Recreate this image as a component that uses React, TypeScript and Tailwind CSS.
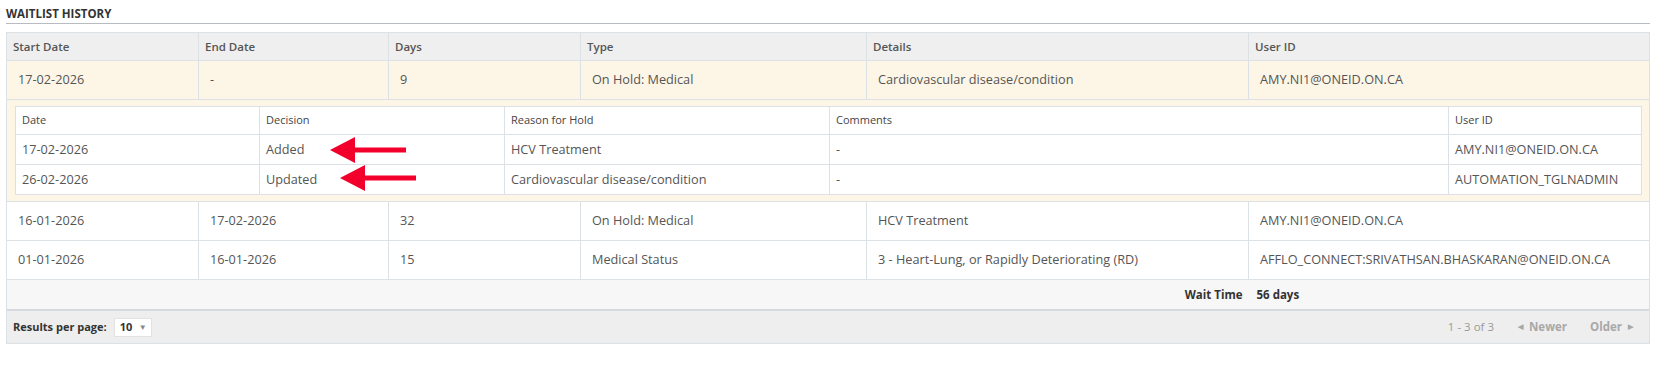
import React from "react";

const outerRows = [
  ["16-01-2026", "17-02-2026", "32", "On Hold: Medical", "HCV Treatment", "AMY.NI1@ONEID.ON.CA"],
  ["01-01-2026", "16-01-2026", "15", "Medical Status", "3 - Heart-Lung, or Rapidly Deteriorating (RD)", "AFFLO_CONNECT:SRIVATHSAN.BHASKARAN@ONEID.ON.CA"],
];

function Arrow({ className }: { className: string }) {
  return (
    <svg className={className} width="76" height="26" viewBox="0 0 76 26">
      <polygon points="0,13 25,0 25,10.5 76,10.5 76,15.5 25,15.5 25,26" fill="#f2002b" />
    </svg>
  );
}

export default function App() {
  const th = "h-[28px] px-[6px] text-left align-middle font-semibold text-[11.5px] text-[#555] border border-[#dce1e6]";
  const td = "h-[39px] pl-[11px] pr-[6px] text-left align-middle text-[12.7px] text-[#555] border border-[#dce1e6]";
  const nth = "h-[28px] px-[6px] text-left align-middle font-normal text-[11px] text-[#444] border border-[#dce1e6]";
  const ntd = "h-[30px] px-[6px] text-left align-middle text-[12.7px] text-[#555] border border-[#dce1e6]";
  return (
    <div className="w-[1662px] h-[377px] bg-white font-['Open_Sans',sans-serif] pl-[6px] pr-[12px]">
      <div className="h-[24px] border-b border-[#b7bcc3] flex items-end pb-[4px]">
        <span className="text-[11.5px] font-bold text-[#333] leading-none">WAITLIST HISTORY</span>
      </div>
      <div className="mt-[8px] relative">
        <table className="w-[1644px] table-fixed border-collapse">
          <colgroup>
            <col className="w-[192px]" />
            <col className="w-[190px]" />
            <col className="w-[192px]" />
            <col className="w-[286px]" />
            <col className="w-[382px]" />
            <col />
          </colgroup>
          <thead>
            <tr className="bg-[#efefef]">
              <th className={th}>Start Date</th>
              <th className={th}>End Date</th>
              <th className={th}>Days</th>
              <th className={th}>Type</th>
              <th className={th}>Details</th>
              <th className={th}>User ID</th>
            </tr>
          </thead>
          <tbody>
            <tr className="bg-[#fdf6e7]">
              <td className={td}>17-02-2026</td>
              <td className={td}>-</td>
              <td className={td}>9</td>
              <td className={td}>On Hold: Medical</td>
              <td className={td}>Cardiovascular disease/condition</td>
              <td className={td}>AMY.NI1@ONEID.ON.CA</td>
            </tr>
            <tr className="bg-[#fdf6e7]">
              <td colSpan={6} className="border border-[#dce1e6] pl-[8px] pr-[7px] pt-[6px] pb-[6px]">
                <table className="w-full table-fixed border-collapse bg-white">
                  <colgroup>
                    <col className="w-[244px]" />
                    <col className="w-[245px]" />
                    <col className="w-[325px]" />
                    <col className="w-[619px]" />
                    <col />
                  </colgroup>
                  <thead>
                    <tr>
                      <th className={nth}>Date</th>
                      <th className={nth}>Decision</th>
                      <th className={nth}>Reason for Hold</th>
                      <th className={nth}>Comments</th>
                      <th className={nth}>User ID</th>
                    </tr>
                  </thead>
                  <tbody>
                    <tr>
                      <td className={ntd}>17-02-2026</td>
                      <td className={ntd}>Added</td>
                      <td className={ntd}>HCV Treatment</td>
                      <td className={ntd}>-</td>
                      <td className={ntd}>AMY.NI1@ONEID.ON.CA</td>
                    </tr>
                    <tr>
                      <td className={ntd}>26-02-2026</td>
                      <td className={ntd}>Updated</td>
                      <td className={ntd}>Cardiovascular disease/condition</td>
                      <td className={ntd}>-</td>
                      <td className={ntd}>AUTOMATION_TGLNADMIN</td>
                    </tr>
                  </tbody>
                </table>
              </td>
            </tr>
            {outerRows.map((r, i) => (
              <tr key={i} className="bg-white">
                {r.map((c, j) => (
                  <td key={j} className={td}>
                    {c}
                  </td>
                ))}
              </tr>
            ))}
            <tr className="bg-[#f7f7f7]">
              <td colSpan={5} className="h-[30px] pr-[6px] text-right align-middle text-[11.5px] font-bold text-[#333] border-t border-l border-b border-[#dce1e6]">
                Wait Time
              </td>
              <td className="h-[30px] pl-[8px] text-left align-middle text-[11.5px] font-bold text-[#333] border-t border-r border-b border-[#dce1e6]">
                56 days
              </td>
            </tr>
          </tbody>
        </table>
        <div className="w-[1644px] h-[35px] bg-[#eeeeee] border border-t-2 border-[#dce1e6] border-t-[#d6dae0] -mt-[1px] flex items-center justify-between pl-[6px] pr-[16px]">
          <div className="flex items-center">
            <span className="text-[11px] font-bold text-[#333]">Results per page:</span>
            <div className="ml-[7px] w-[38px] h-[19px] bg-white border border-[#e2e2e2] flex items-center justify-between pl-[5px] pr-[4px]">
              <span className="text-[11px] font-bold text-[#333]">10</span>
              <span className="text-[8px] text-[#888]">▼</span>
            </div>
          </div>
          <div className="flex items-center text-[11.5px] text-[#9a9a9a]">
            <span>1 - 3 of 3</span>
            <span className="ml-[24px] font-bold text-[#a8a8a8] flex items-center">
              <span className="text-[7px] mr-[6px]">◀</span>Newer
            </span>
            <span className="ml-[23px] font-bold text-[#a8a8a8] flex items-center">
              Older<span className="text-[7px] ml-[6px]">▶</span>
            </span>
          </div>
        </div>
        <Arrow className="absolute left-[324px] top-[105px]" />
        <Arrow className="absolute left-[334px] top-[133px]" />
      </div>
    </div>
  );
}
